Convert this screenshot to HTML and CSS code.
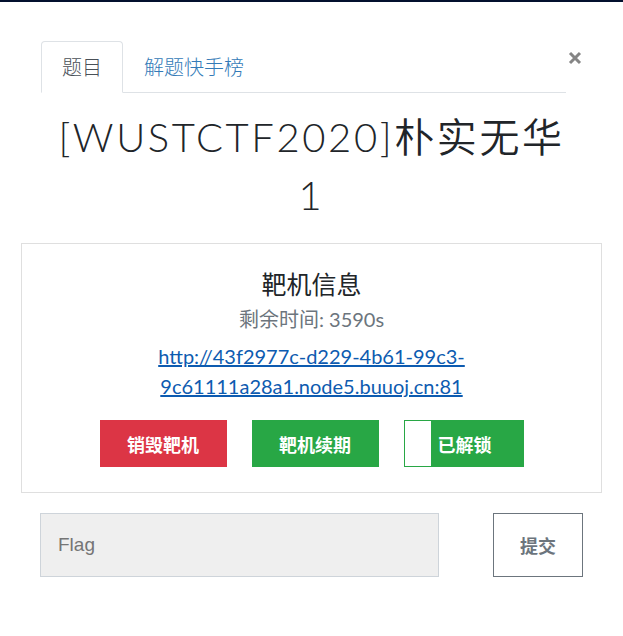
FILE: index.html
```html
<!DOCTYPE html>
<html lang="zh">
<head>
<meta charset="utf-8">
<title>Challenge</title>
<link rel="stylesheet" href="styles.css">
</head>
<body>
<div class="topbar"></div>
<div class="modal">
  <div class="modal-header">
    <ul class="nav">
      <li class="tab active">题目</li>
      <li class="tab"><a href="#">解题快手榜</a></li>
    </ul>
    <button class="close" aria-label="Close">
      <svg width="14" height="14" viewBox="0 0 14 14"><path d="M2 2 L12 12 M12 2 L2 12" stroke="#858585" stroke-width="3" stroke-linecap="butt" fill="none"/></svg>
    </button>
  </div>
  <h2 class="title">[WUSTCTF2020]<span class="cjk">朴实无华</span> 1</h2>
  <div class="card">
    <h4 class="card-title">靶机信息</h4>
    <div class="remain">剩余时间: 3590s</div>
    <div class="link-wrap"><a class="link" href="#">http://43f2977c-d229-4b61-99c3-9c61111a28a1.node5.buuoj.cn:81</a></div>
    <div class="btns">
      <button class="btn btn-red">销毁靶机</button>
      <button class="btn btn-green">靶机续期</button>
      <button class="btn btn-toggle"><span class="knob"></span><span class="tlabel">已解锁</span></button>
    </div>
  </div>
  <div class="flag-row">
    <input class="flag-input" type="text" placeholder="Flag">
    <button class="submit">提交</button>
  </div>
</div>
</body>
</html>
```
FILE: styles.css
```css
* { box-sizing: border-box; }
body {
  margin: 0;
  background: #fff;
  font-family: "Lato", "Noto Sans CJK SC", sans-serif;
  color: #212529;
}
.topbar {
  height: 2px;
  background: #03102e;
}
.modal {
  padding: 0 21px;
}
.modal-header {
  display: flex;
  align-items: flex-start;
  padding: 0 20px;
  margin-top: 39px;
}
.nav {
  flex: 1;
  display: flex;
  list-style: none;
  margin: 0;
  padding: 0;
  border-bottom: 1px solid #dee2e6;
}
.tab {
  padding: 12px 20px;
  line-height: 26px;
  font-size: 20px;
  font-weight: 300;
  font-family: "Noto Sans CJK SC", sans-serif;
  border: 1px solid transparent;
  border-radius: 4px 4px 0 0;
  margin-bottom: -1px;
  color: #495057;
}
.tab.active {
  border-color: #dee2e6 #dee2e6 #fff;
  background: #fff;
}
.tab a {
  color: #337ab7;
  text-decoration: none;
}
.close {
  margin: 10px 0 0 2px;
  padding: 0;
  border: 0;
  background: none;
  width: 14px;
  height: 14px;
  display: flex;
}
.title {
  margin: 15px 0 0;
  padding: 0 25px;
  text-align: center;
  font-family: "Lato", "Noto Sans CJK SC", sans-serif;
  font-weight: 300;
  font-size: 40px;
  letter-spacing: 2.6px;
  line-height: 58px;
  color: #212529;
}
.title .cjk {
  font-weight: 350;
}
.card {
  margin-top: 19px;
  border: 1px solid #dfdfdf;
  padding: 25px 20px;
  text-align: center;
}
.card-title {
  margin: 0;
  font-size: 25px;
  line-height: 30px;
  font-weight: 400;
  font-family: "Lato", "Noto Sans CJK SC", sans-serif;
  color: #212529;
}
.remain {
  margin-top: 8px;
  font-size: 20px;
  line-height: 24px;
  color: #6c757d;
}
.link-wrap {
  margin-top: 10px;
  line-height: 30px;
  font-size: 20px;
}
.link {
  color: #0d5bb0;
  text-decoration: underline;
}
.btns {
  margin-top: 19px;
  display: flex;
  justify-content: center;
  gap: 25px;
}
.btn {
  height: 47px;
  width: 127px;
  border: 0;
  padding: 0;
  color: #fff;
  font-size: 18px;
  font-weight: 700;
  font-family: "Noto Sans CJK SC", sans-serif;
}
.btn-red { background: #dc3545; }
.btn-green { background: #28a745; }
.btn-toggle {
  width: 120px;
  background: #28a745;
  border: 1px solid #28a745;
  display: flex;
  align-items: stretch;
}
.knob {
  width: 26px;
  background: #fff;
}
.tlabel {
  padding-left: 7px;
  align-self: center;
}
.flag-row {
  margin-top: 20px;
  padding: 0 19px;
  display: flex;
  justify-content: space-between;
}
.flag-input {
  width: 399px;
  height: 64px;
  background: #efefef;
  border: 1px solid #ced4da;
  padding: 0 17px;
  font-size: 19px;
  font-family: "Liberation Sans", Arial, sans-serif;
  color: #495057;
  outline: none;
}
.flag-input::placeholder {
  color: #757575;
}
.submit {
  width: 90px;
  height: 64px;
  background: #fff;
  border: 1px solid #6c757d;
  color: #6c757d;
  font-size: 18px;
  font-weight: 700;
  font-family: "Noto Sans CJK SC", sans-serif;
}
```
